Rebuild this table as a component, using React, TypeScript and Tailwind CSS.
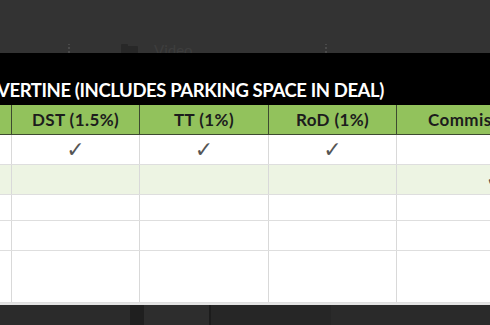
import React from "react";

const Check = () => (
  <span className="text-[#555] text-[22px] leading-none" style={{ fontFamily: "'DejaVu Sans', sans-serif" }}>✓</span>
);

export default function App() {
  const font = { fontFamily: "Lato, 'Open Sans', sans-serif" };
  const rows: { h: string; bg: string; checks: boolean; last?: boolean }[] = [
    { h: "h-[30px]", bg: "bg-white", checks: true },
    { h: "h-[30px]", bg: "bg-[#edf4e3]", checks: false, last: true },
    { h: "h-[26px]", bg: "bg-white", checks: false },
    { h: "h-[30px]", bg: "bg-white", checks: false },
    { h: "h-[52px]", bg: "bg-white", checks: false },
  ];
  return (
    <div className="w-[490px] h-[325px] overflow-hidden bg-[#333333]" style={font}>
      {/* top dim bar */}
      <div className="h-[53px] bg-[#333333] flex items-end">
        <div className="flex items-end h-[9px] overflow-hidden w-full">
          <div className="ml-[68px] flex flex-col gap-[2px] pt-[1px]">
            <span className="w-[2px] h-[2px] bg-[#4a4a4a]" />
            <span className="w-[2px] h-[2px] bg-[#4a4a4a]" />
            <span className="w-[2px] h-[2px] bg-[#4a4a4a]" />
          </div>
          <div className="ml-[51px] w-[17px] h-[9px] relative">
            <div className="absolute left-0 top-0 w-[7px] h-[3px] bg-[#282828] rounded-t-[1px]" />
            <div className="absolute left-0 top-[2px] w-[17px] h-[9px] bg-[#282828] rounded-[1px]" />
          </div>
          <span className="ml-[16px] text-[15px] leading-none text-[#3e3e3e] translate-y-[5px]">Video</span>
          <div className="ml-[132px] flex flex-col gap-[2px] pt-[1px]">
            <span className="w-[2px] h-[2px] bg-[#4a4a4a]" />
            <span className="w-[2px] h-[2px] bg-[#4a4a4a]" />
            <span className="w-[2px] h-[2px] bg-[#4a4a4a]" />
          </div>
        </div>
      </div>
      {/* title band */}
      <div className="h-[52px] bg-black flex items-end pb-[6px] overflow-hidden">
        <span className="-ml-[3px] whitespace-nowrap text-white font-bold text-[18.5px] tracking-[-0.4px] leading-none">
          VERTINE (INCLUDES PARKING SPACE IN DEAL)
        </span>
      </div>
      {/* table */}
      <div className="bg-white">
        <div className="grid grid-cols-[12px_128px_129px_128px_1fr] h-[30px] bg-[#92c25c] border-b border-[#3d4a30]">
          <div className="border-r border-[#3d4a30]" />
          <div className="border-r border-[#3d4a30] flex items-center justify-center text-[17px] tracking-[0.4px] font-bold text-[#1c1c1c]">DST (1.5%)</div>
          <div className="border-r border-[#3d4a30] flex items-center justify-center text-[17px] tracking-[0.4px] font-bold text-[#1c1c1c]">TT (1%)</div>
          <div className="border-r border-[#3d4a30] flex items-center justify-center text-[17px] tracking-[0.4px] font-bold text-[#1c1c1c]">RoD (1%)</div>
          <div className="flex items-center pl-[31px] text-[17px] tracking-[0.4px] font-bold text-[#1c1c1c] whitespace-nowrap overflow-hidden">Commission</div>
        </div>
        {rows.map((r, i) => (
          <div key={i} className={`grid grid-cols-[12px_128px_129px_128px_1fr] ${r.h} ${r.bg} border-b border-[#dedede]`}>
            <div className="border-r border-[#d9d9d9]" />
            <div className="border-r border-[#d9d9d9] flex items-center justify-center">{r.checks && <Check />}</div>
            <div className="border-r border-[#d9d9d9] flex items-center justify-center">{r.checks && <Check />}</div>
            <div className="border-r border-[#d9d9d9] flex items-center justify-center">{r.checks && <Check />}</div>
            <div className="flex items-center justify-end overflow-hidden">
              {r.last && <span className="-mr-[14px]"><Check /></span>}
            </div>
          </div>
        ))}
        <div className="h-[2px] bg-[#e4e4e4]" />
      </div>
      {/* bottom dark band */}
      <div className="h-[20px] flex">
        <div className="w-[130px] bg-[#2b2b2b]" />
        <div className="w-[14px] bg-[#1f1f1f]" />
        <div className="w-[65px] bg-[#2d2d2d]" />
        <div className="w-[2px] bg-[#1c1c1c]" />
        <div className="w-[120px] bg-[#262626]" />
        <div className="flex-1 bg-[#2a2a2a]" />
      </div>
    </div>
  );
}
